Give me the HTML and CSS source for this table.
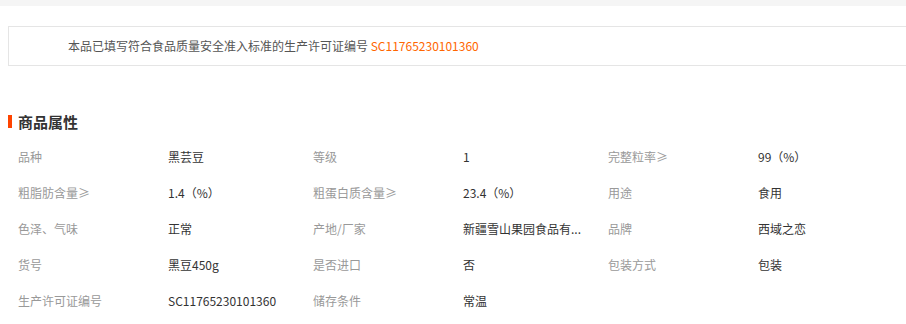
FILE: index.html
```html
<!DOCTYPE html>
<html lang="zh-CN">
<head>
<meta charset="utf-8">
<title>商品属性</title>
<link rel="stylesheet" href="styles.css">
</head>
<body>
<div class="top-band"></div>
<div class="notice">本品已填写符合食品质量安全准入标准的生产许可证编号 <span class="code">SC11765230101360</span></div>
<h2 class="section-title">商品属性</h2>
<dl class="attrs">
  <dt>品种</dt><dd>黑芸豆</dd>
  <dt>等级</dt><dd>1</dd>
  <dt>完整粒率≥</dt><dd>99（%）</dd>
  <dt>粗脂肪含量≥</dt><dd>1.4（%）</dd>
  <dt>粗蛋白质含量≥</dt><dd>23.4（%）</dd>
  <dt>用途</dt><dd>食用</dd>
  <dt>色泽、气味</dt><dd>正常</dd>
  <dt>产地/厂家</dt><dd title="新疆雪山果园食品有限公司">新疆雪山果园食品有...</dd>
  <dt>品牌</dt><dd>西域之恋</dd>
  <dt>货号</dt><dd>黑豆450g</dd>
  <dt>是否进口</dt><dd>否</dd>
  <dt>包装方式</dt><dd>包装</dd>
  <dt>生产许可证编号</dt><dd>SC11765230101360</dd>
  <dt>储存条件</dt><dd>常温</dd>
</dl>
</body>
</html>
```
FILE: styles.css
```css
html, body {
  margin: 0;
  padding: 0;
  background: #fff;
  overflow: hidden;
}
body {
  font-family: "Noto Sans CJK SC", "Noto Sans", sans-serif;
  font-size: 12px;
  color: #333;
}
.top-band {
  height: 6px;
  background: #f5f5f5;
}
.notice {
  margin: 20px 0 0 8px;
  width: 1000px;
  height: 38px;
  line-height: 38px;
  border: 1px solid #e5e5e5;
  padding-left: 59px;
  color: #555;
}
.code {
  color: #ff6600;
}
.section-title {
  margin: 48px 0 0 8px;
  padding-left: 10px;
  height: 15px;
  line-height: 15px;
  font-size: 15px;
  font-weight: bold;
  color: #333;
  position: relative;
}
.section-title::before {
  content: "";
  position: absolute;
  left: 0;
  top: 1px;
  width: 4px;
  height: 13px;
  background: #ff4400;
}
.attrs {
  margin: 10px 0 0 18px;
  display: grid;
  grid-template-columns: 150px 145px 150px 145px 150px 145px;
  grid-auto-rows: 36px;
  line-height: 36px;
}
.attrs dt {
  color: #999;
  margin: 0;
}
.attrs dd {
  margin: 0;
  color: #333;
  white-space: nowrap;
}
```
